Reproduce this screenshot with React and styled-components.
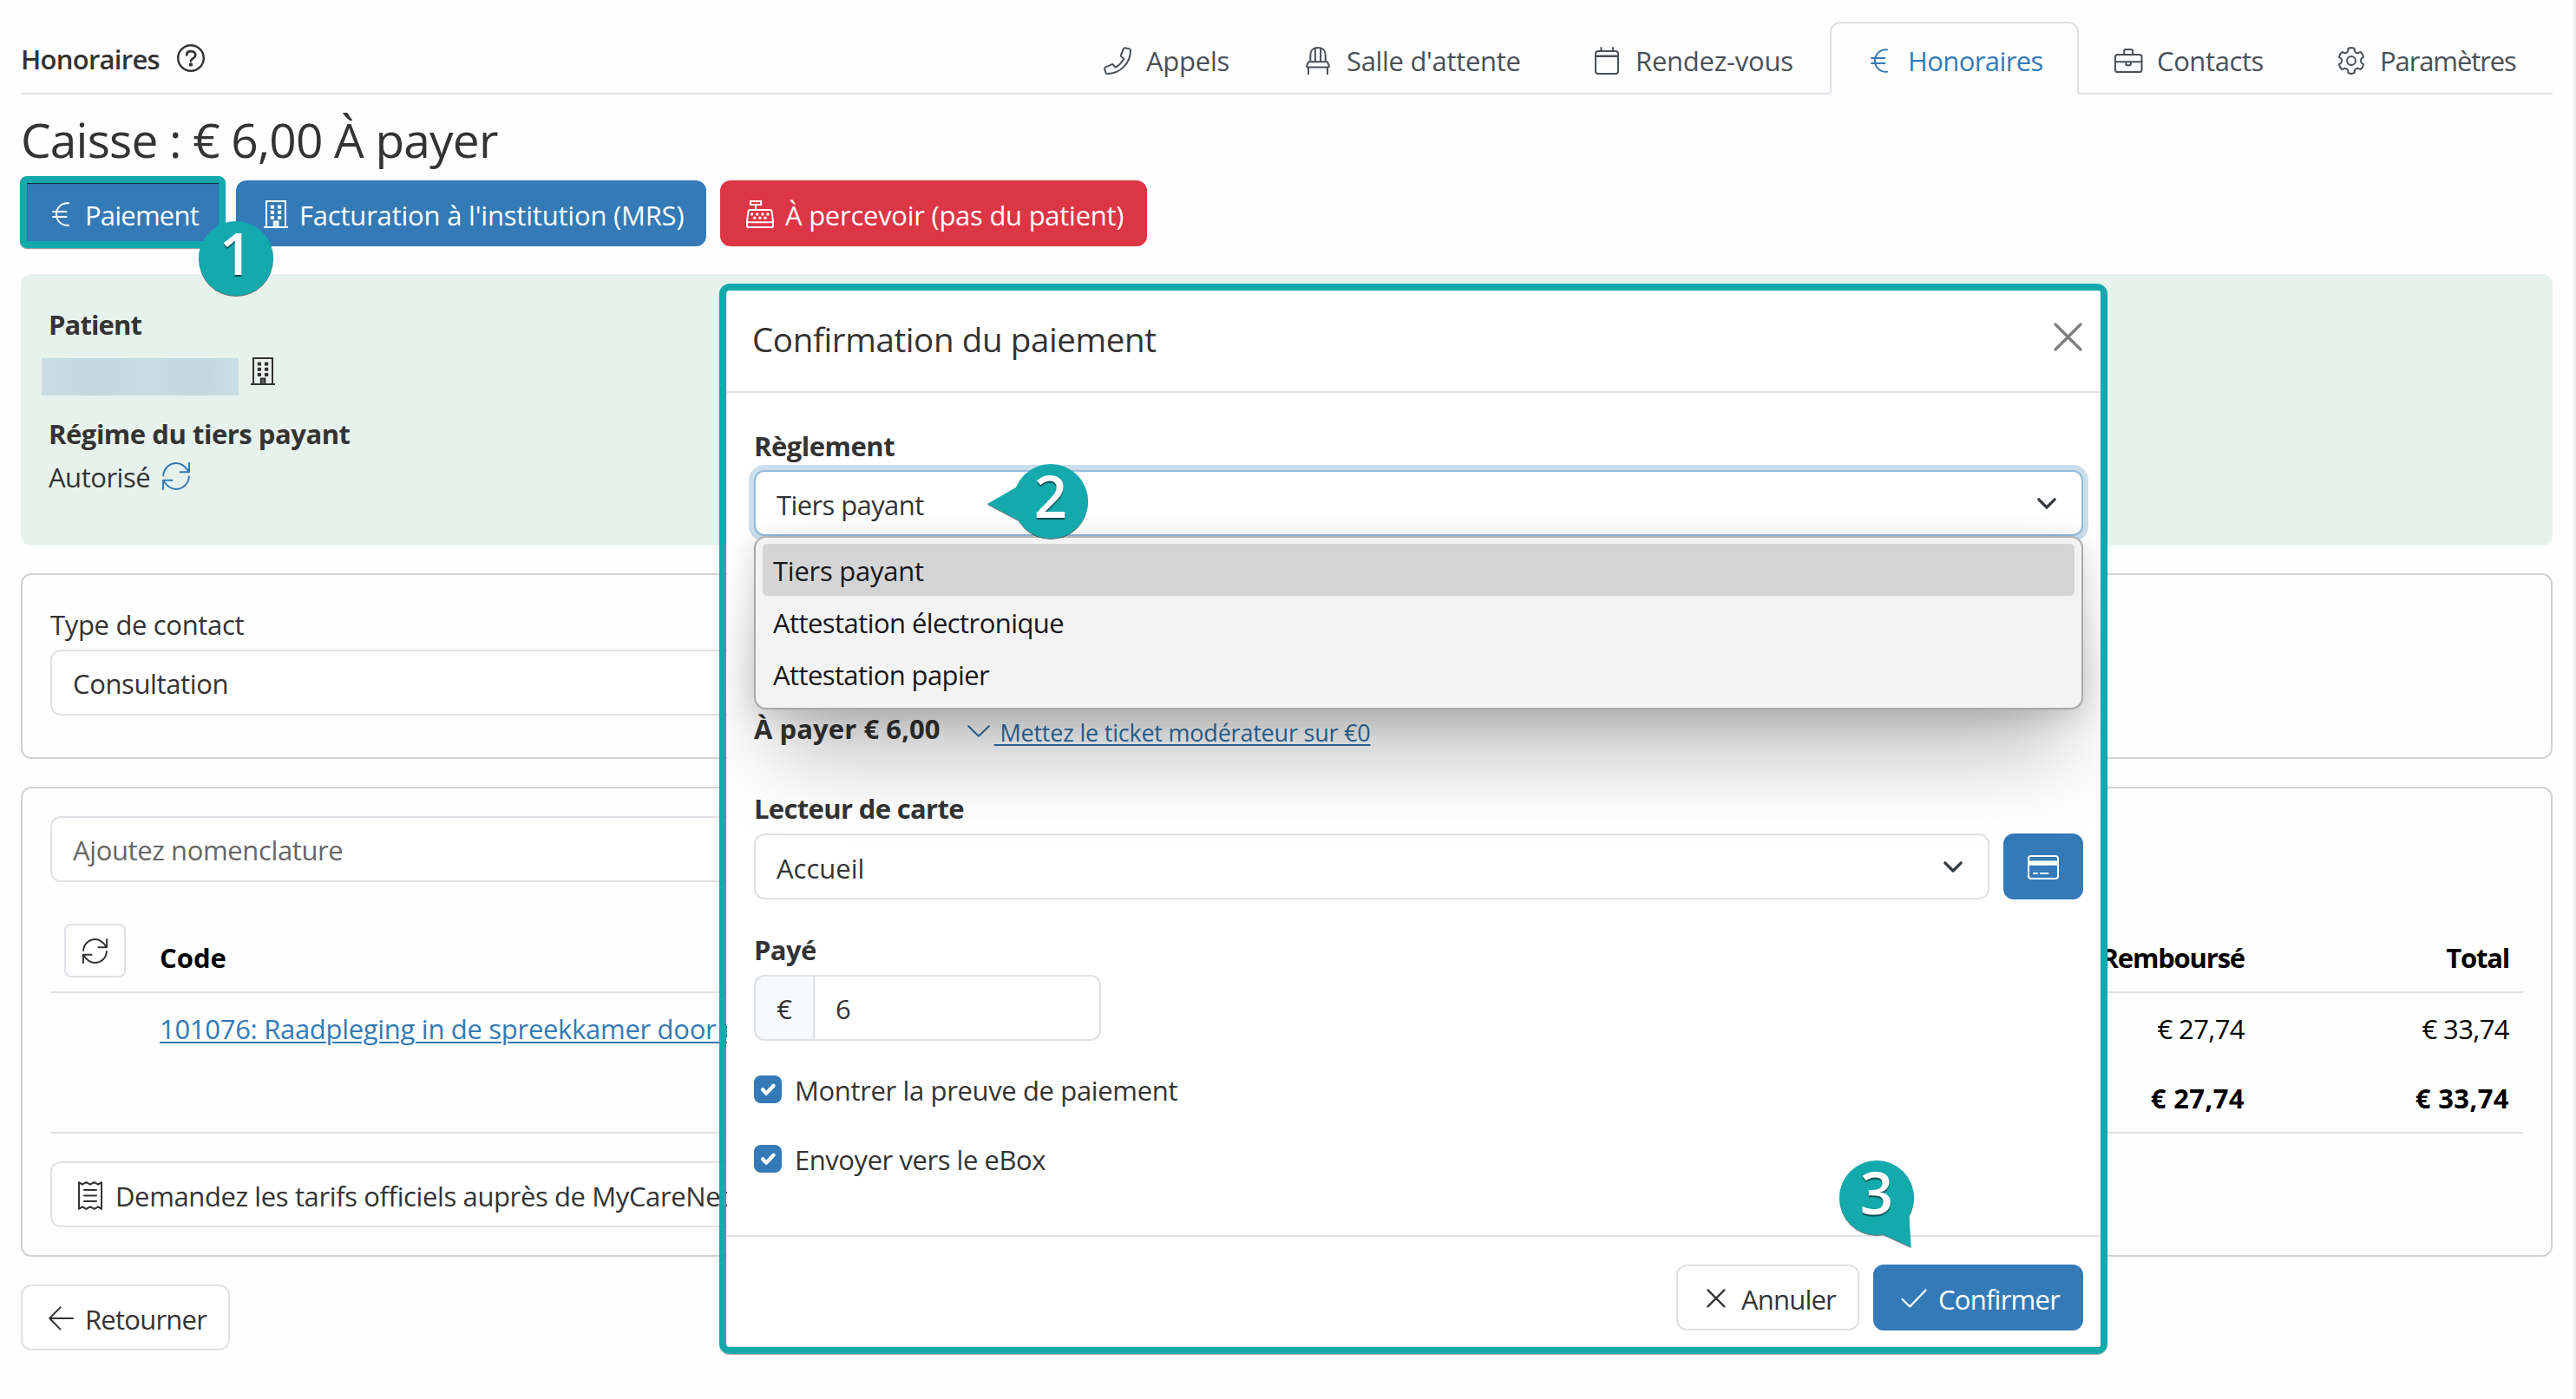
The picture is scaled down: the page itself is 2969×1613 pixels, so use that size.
import React from "react";
import styled, { createGlobalStyle } from "styled-components";

const C = {
  ink: "#333333",
  nav: "#495057",
  blue: "#337ab7",
  red: "#dc3545",
  teal: "#13a9ad",
  line: "#dee2e6",
  card: "#d2d2d2",
};

const GlobalStyle = createGlobalStyle`
  *, *::before, *::after { box-sizing: border-box; }
  body {
    margin: 0;
    background: #fefefe;
    color: ${C.ink};
    font-family: "Open Sans", "Noto Sans", sans-serif;
    font-size: 31px;
    line-height: 48px;
  }
  svg { display: block; flex: none; overflow: visible; }
`;

/* ---------- text ---------- */
const Text = styled.span`
  display: inline-block;
  padding-top: 2px;
  line-height: 46px;
  white-space: pre;
  font-weight: ${(p) => p.$weight || 400};
  letter-spacing: ${(p) => p.$ls || 0}px;
`;

const Link = styled.a`
  display: inline-block;
  padding-top: 2px;
  line-height: 46px;
  white-space: pre;
  color: ${(p) => p.$color || C.blue};
  font-size: ${(p) => p.$size || 31}px;
  letter-spacing: ${(p) => p.$ls || 0}px;
  text-decoration: underline;
  text-decoration-thickness: 2px;
  text-underline-offset: 3px;
  text-decoration-skip-ink: auto;
`;

/* ---------- icons ---------- */
const Line = ({ w, h, sw = 2, children, ...rest }) => (
  <svg
    width={w}
    height={h}
    viewBox={`0 0 ${w} ${h}`}
    fill="none"
    stroke="currentColor"
    strokeWidth={sw}
    strokeLinecap="round"
    strokeLinejoin="round"
    {...rest}
  >
    {children}
  </svg>
);

const HelpIcon = () => (
  <Line w={32} h={32} sw={2.4}>
    <circle cx="16" cy="16" r="14.8" />
    <path d="M11.2 12.4c.2-2.600 2-4.200 4.500-4.200h.900c2.600 0 4.600 1.800 4.600 4.200 0 1.700-.9 2.900-2.300 3.700-1.700 1-2.900 1.500-2.900 3.200" strokeWidth="2.8" />
    <circle cx="16" cy="23.400" r="1.300" fill="currentColor" stroke="none" />
    <circle cx="16" cy="23.400" r="1" fill="currentColor" />
  </Line>
);
const PhoneIcon = () => (
  <Line w={32} h={32}>
    <path d="M1.700 23.600 9.200 20.300Q10.400 19.800 11.200 20.800L13.600 23.700Q20 20.300 23.400 13.800L20.500 11.400Q19.500 10.500 20 9.400L23 2.100Q23.500.9 24.800 1.200L29.800 2.400Q31 2.700 31 4C31 19 19 31 4 31Q2.700 31 2.400 29.800L1.100 24.800Q.9 23.900 1.700 23.600Z" />
  </Line>
);
const ChairIcon = () => (
  <Line w={28} h={32}>
    <path d="M5.300 16.500V9.200C5.300 4 8.700 1 14 1s8.700 3 8.700 8.200v7.300M10.900 1.800v14.700M17.100 1.800v14.700" />
    <path d="M4 17.200h20q.9 0 1.200.8l1.500 3.400q.7 2-1.300 2H2.600q-2 0-1.300-2l1.500-3.400q.3-.8 1.200-.8z" />
    <path d="M3 24v7.200M25 24v7.200" />
  </Line>
);
const CalendarIcon = () => (
  <Line w={28} h={32}>
    <rect x="1" y="5" width="26" height="26" rx="3" />
    <path d="M1 10.800h26" strokeWidth="2.400" />
    <path d="M7.400 1v4M21 1v4" />
  </Line>
);
const EuroIcon = () => (
  <Line w={20} h={28}>
    <path d="M19 1.200h-1.500C10.400 1.200 5 6.800 5 14s5.400 12.800 12.500 12.800H19M1 11h15.500M1 17h15.500" />
  </Line>
);
const BriefcaseIcon = () => (
  <Line w={32} h={28}>
    <rect x="1" y="7" width="30.500" height="20" rx="2.600" />
    <path d="M11.200 7V2.500q0-1.500 1.500-1.500h6.800q1.500 0 1.500 1.500V7M1 15.200h30.500M13.300 15.200v3q0 1 1 1h3.500q1 0 1-1v-3" />
  </Line>
);
const gearPath = (() => {
  const pts = [];
  const at = (deg, r) => {
    const a = (deg * Math.PI) / 180;
    pts.push(`${(16 + r * Math.cos(a)).toFixed(2)} ${(16 + r * Math.sin(a)).toFixed(2)}`);
  };
  for (let k = 0; k < 6; k += 1) {
    const a = -90 + 60 * k;
    at(a - 18, 11.9);
    at(a - 14, 14.6);
    at(a, 15);
    at(a + 14, 14.6);
    at(a + 18, 11.9);
    at(a + 30, 10.7);
  }
  return `M${pts.join("L")}Z`;
})();
const GearIcon = () => (
  <Line w={32} h={32}>
    <path d={gearPath} />
    <circle cx="16" cy="16" r="4.900" />
  </Line>
);
const BuildingIcon = () => (
  <Line w={28} h={32} strokeLinecap="butt" strokeLinejoin="miter">
    <path d="M3 31V1h22v30M0 31h28" />
    <path d="M11.800 31v-6.500h4.600V31" />
    <g fill="currentColor" stroke="none">
      {[5.6, 11.8, 18].map((y) => (
        <React.Fragment key={y}>
          <rect x="7.800" y={y} width="4.200" height="4" />
          <rect x="16" y={y} width="4.200" height="4" />
        </React.Fragment>
      ))}
      <rect x="12" y="24.500" width="4.200" height="6.500" opacity=".75" />
    </g>
  </Line>
);
const RegisterIcon = () => (
  <Line w={32} h={32}>
    <rect x="5" y="1" width="12.200" height="4" strokeLinejoin="miter" />
    <path d="M11 5.500v5M4.500 11h23q1.700 0 2 1.600L31 24.500v4.700q0 1.800-1.800 1.800H2.800Q1 31 1 29.200v-4.700l1.500-11.900Q2.800 11 4.500 11zM1 25.200h30" />
    <g fill="currentColor" stroke="none">
      {[6.6, 12.7, 18.9, 25].map((x) => (
        <circle key={x} cx={x} cy="16" r="1.700" />
      ))}
      {[9.7, 15.9, 22].map((x) => (
        <circle key={x} cx={x} cy="20.200" r="1.700" />
      ))}
    </g>
  </Line>
);
const RefreshIcon = ({ size = 32 }) => (
  <svg width={size} height={size} viewBox="0 0 32 32" fill="none" stroke="currentColor" strokeWidth={64 / size} strokeLinecap="round" strokeLinejoin="round">
    <path d="M1.200 15.500C1.600 7.400 8.200 1 16.200 1c5.800 0 10.700 4 14.600 10M31 1v10.300H20.500M30.800 16.500C30.400 24.600 23.800 31 15.800 31 10 31 5.100 27 1.200 21M1 31V20.700h10.500" />
  </svg>
);
const ReceiptIcon = () => (
  <Line w={28} h={33}>
    <path d="M1 1.200v30.600l3.800-2.500 4.600 2.600 4.600-2.600 4.600 2.600 4.600-2.600 3.800 2.500V1.200l-3.800 2.500L18.600 1.100 14 3.700 9.400 1.100 4.800 3.700zM7 10h14M7 16.500h14M7 23h14" />
  </Line>
);
const BackIcon = () => (
  <Line w={29} h={28}>
    <path d="M1.400 14H28M13.500 1.400 1.200 14l12.300 12.600" />
  </Line>
);
const SelectArrow = () => (
  <Line w={22} h={13} sw={3.2}>
    <path d="m1.800 1.800 9.200 9.200 9.200-9.200" stroke="#343a40" />
  </Line>
);
const ThinArrow = () => (
  <Line w={26} h={14}>
    <path d="M1.200 1.200 13 12.800 24.800 1.200" />
  </Line>
);
const CloseIcon = () => (
  <Line w={33} h={33} sw={3.4}>
    <path d="m2 2 29 29M31 2 2 31" stroke="#7f7f7f" />
  </Line>
);
const CrossIcon = () => (
  <Line w={22} h={22} sw={2.3}>
    <path d="m1.400 1.400 19 19M20.400 1.400l-19 19" />
  </Line>
);
const CheckIcon = () => (
  <Line w={30} h={22} sw={2.2}>
    <path d="m1.500 12 8.700 8.500L28.500 1.500" />
  </Line>
);
const CardIcon = () => (
  <Line w={36} h={28}>
    <rect x="1" y="1" width="34" height="26" rx="3" />
    <path d="M2 6.400h32v5.400H2z" fill="currentColor" stroke="none" />
    <path d="M7 21h4M15 21h8.500" />
  </Line>
);
const TickIcon = () => (
  <svg width="32" height="32" viewBox="0 0 20 20" fill="none" stroke="#fff" strokeWidth="2.700" strokeLinecap="round" strokeLinejoin="round">
    <path d="m6.300 10.200 2.600 2.700 5.200-5.500" />
  </svg>
);

/* ---------- page frame ---------- */
const Page = styled.div`
  position: relative;
  width: 2969px;
  height: 1613px;
  padding: 0 24px;
  border-right: 3px solid #eeeeef;
  overflow: hidden;
  display: flex;
  flex-direction: column;
  align-items: stretch;
`;

const Header = styled.header`
  height: 109px;
  flex: none;
  display: flex;
  justify-content: space-between;
  align-items: flex-end;
  border-bottom: 2px solid ${C.line};
`;

const Crumb = styled.div`
  display: flex;
  align-items: center;
  gap: 20px;
  height: 80px;
`;

const Tabs = styled.nav`
  display: flex;
  margin-bottom: -2px;
`;

const Tab = styled.div`
  height: 84px;
  width: ${(p) => p.$width}px;
  display: flex;
  align-items: center;
  padding: 6px 0 0 ${(p) => (p.$active ? 35 : 37)}px;
  color: ${(p) => (p.$active ? C.blue : C.nav)};
  border-radius: 12px 12px 0 0;
  border: ${(p) => (p.$active ? `2px solid ${C.line}` : "0")};
  border-bottom: ${(p) => (p.$active ? "2px solid #fefefe" : "0")};
`;

const TabIcon = styled.span`
  width: 40px;
  margin-right: 13px;
  display: flex;
  justify-content: center;
`;

const TabLabel = styled.span`
  height: 50px;
`;

const Title = styled.h1`
  margin: 14px 0 10px;
  height: 75px;
  line-height: 75px;
  font-size: 55px;
  font-weight: 400;
  letter-spacing: -0.81px;
`;

const Actions = styled.div`
  display: flex;
  gap: 16px;
  margin-bottom: 32px;
`;

const tones = {
  primary: { bg: C.blue, fg: "#fff", line: C.blue },
  danger: { bg: C.red, fg: "#fff", line: C.red },
  plain: { bg: "#fff", fg: C.ink, line: C.line },
};

const Button = styled.button`
  height: 76px;
  width: ${(p) => (p.$width ? `${p.$width}px` : "auto")};
  flex: none;
  display: flex;
  align-items: center;
  justify-content: ${(p) => (p.$center ? "center" : "flex-start")};
  gap: ${(p) => p.$gap || 12}px;
  padding: 2px 0 0 ${(p) => p.$pad || 0}px;
  border: 2px solid ${(p) => tones[p.$tone].line};
  border-radius: 12px;
  background: ${(p) => tones[p.$tone].bg};
  color: ${(p) => tones[p.$tone].fg};
  font: inherit;
  text-align: left;
`;

/* ---------- cards ---------- */
const PatientPanel = styled.section`
  flex: none;
  height: 313px;
  margin-bottom: 32px;
  padding: 33px 32px;
  border-radius: 12px;
  background: #e8f2ec;
  display: flex;
  flex-direction: column;
`;

const NameRow = styled.div`
  display: flex;
  align-items: flex-start;
  gap: 14px;
  height: 44px;
  margin: 15px 0 19px -8px;
`;

const Redacted = styled.div`
  width: 227px;
  height: 43px;
  margin-top: 1px;
  background: linear-gradient(90deg, #cadde3 0%, #c1d8e0 26%, #c8dce3 54%, #c1d8e0 78%, #cadee4 100%);
`;

const StatusRow = styled.div`
  display: flex;
  align-items: center;
  gap: 14px;
  height: 51px;
  color: ${C.ink};
  svg { color: ${C.blue}; }
`;

const Card = styled.section`
  flex: none;
  height: ${(p) => p.$height}px;
  margin-bottom: 32px;
  padding: 32px;
  border: 2px solid ${C.card};
  border-radius: 12px;
  display: flex;
  flex-direction: column;
`;

const Field = styled.div`
  flex: none;
  height: 76px;
  display: flex;
  align-items: center;
  justify-content: space-between;
  padding: 0 29px 0 ${(p) => p.$pad || 24}px;
  border: 2px solid ${(p) => (p.$focus ? "#94bbdc" : C.line)};
  border-radius: ${(p) => p.$radius || "12px"};
  box-shadow: ${(p) => (p.$focus ? "0 0 0 6px #cbdeed" : "none")};
  background: #fff;
  color: ${(p) => (p.$muted ? "#666" : C.ink)};
  margin-top: ${(p) => p.$top || 0}px;
  width: ${(p) => (p.$width ? `${p.$width}px` : "auto")};
`;

const FieldText = styled(Text)`
  padding-top: 4px;
`;

const Table = styled.div`
  margin: 32px 0;
  color: #000;
  border-bottom: 2px solid ${C.line};
`;

const Row = styled.div`
  display: grid;
  grid-template-columns: 94px 1fr 304px 304px;
  align-items: end;
  padding: 16px;
  border-bottom: ${(p) => (p.$head ? `2px solid ${C.line}` : "0")};
`;

const Amount = styled.div`
  height: 48px;
  padding-right: ${(p) => (p.$last ? 0 : 1)}px;
  text-align: right;
`;

const Cell = styled.div`
  height: 48px;
  padding-left: 16px;
`;

const IconButton = styled.button`
  width: 71px;
  height: 62px;
  padding: 0;
  display: flex;
  align-items: center;
  justify-content: center;
  border: 2px solid ${C.line};
  border-radius: 8px;
  background: #fff;
  color: ${C.ink};
`;

/* ---------- dialog ---------- */
const DialogFrame = styled.div`
  position: absolute;
  left: 829px;
  top: 327px;
  width: 1600px;
  height: 1234px;
  border: 8px solid ${C.teal};
  border-radius: 12px;
  box-shadow: 0 1px 1px rgba(0, 0, 0, 0.4);
`;

const Dialog = styled.div`
  height: 100%;
  margin-left: 1px;
  border-radius: 3px;
  background: #fff;
  overflow: hidden;
  display: flex;
  flex-direction: column;
`;

const DialogHead = styled.div`
  flex: none;
  height: 118px;
  padding: 0 21px 0 29px;
  display: flex;
  justify-content: space-between;
  border-bottom: 2px solid ${C.line};
`;

const DialogTitle = styled.h2`
  margin: 28px 0 0;
  line-height: 56px;
  font-size: 38.5px;
  font-weight: 400;
  letter-spacing: -0.38px;
`;

const CloseSlot = styled.span`
  padding-top: 37px;
`;

const DialogBody = styled.div`
  flex: none;
  height: 971px;
  padding: 36px 20px 0 31px;
  display: flex;
  flex-direction: column;
  align-items: stretch;
`;

const Anchor = styled.div`
  position: relative;
  margin-top: 5px;
`;

const Menu = styled.div`
  position: absolute;
  left: 0;
  right: 0;
  top: 76px;
  height: 200px;
  padding: 7px 8px;
  border: 2px solid #a9a9a9;
  border-top-color: #b4b4b4;
  border-radius: 14px;
  background: #f3f3f3;
  color: #16161a;
  box-shadow: 0 6px 34px rgba(0, 0, 0, 0.16), 0 70px 100px -22px rgba(0, 0, 0, 0.27);
`;

const Option = styled.div`
  height: 60px;
  padding: 6px 0 0 12px;
  border-radius: 5px;
  background: ${(p) => (p.$active ? "#d5d5d5" : "transparent")};
`;

const PayRow = styled.div`
  display: flex;
  height: 48px;
  margin-top: 197px;
`;

const TicketToggle = styled.div`
  display: flex;
  align-items: center;
  gap: 5px;
  padding-top: 10px;
  margin-left: 31px;
  color: #2f70a8;
  svg { margin-top: -3px; }
`;

const Label = styled.div`
  height: 48px;
  margin-top: ${(p) => p.$top || 0}px;
`;

const ReaderRow = styled.div`
  display: flex;
  gap: 16px;
  margin-top: 6px;
  > :first-child { flex: 1; }
`;

const InputGroup = styled.div`
  display: flex;
  width: 400px;
  margin-top: 6px;
  > :last-child { flex: 1; margin-left: -2px; }
`;

const Addon = styled.div`
  width: 70px;
  height: 76px;
  display: flex;
  align-items: center;
  justify-content: center;
  border: 2px solid ${C.line};
  border-radius: 12px 0 0 12px;
  background: #f8f9fa;
`;

const CheckRow = styled.label`
  display: flex;
  align-items: center;
  gap: 15px;
  height: 48px;
  margin-top: ${(p) => p.$top}px;
`;

const CheckBox = styled.span`
  width: 32px;
  height: 32px;
  margin-bottom: 1px;
  border-radius: 8px;
  background: ${C.blue};
`;

const DialogFoot = styled.div`
  flex: 1;
  display: flex;
  justify-content: flex-end;
  gap: 16px;
  padding: 32px 20px 0 0;
  border-top: 2px solid ${C.line};
`;

/* ---------- step callouts ---------- */
const Outline = styled.div`
  position: absolute;
  left: 23px;
  top: 203px;
  width: 237px;
  height: 83px;
  border: 8px solid ${C.teal};
  border-radius: 8px;
  box-shadow: 0 1px 1px rgba(0, 0, 0, 0.45), inset 0 1px 1px rgba(0, 0, 0, 0.7);
`;

const Callout = styled.div`
  position: absolute;
  left: ${(p) => p.$x}px;
  top: ${(p) => p.$y}px;
  width: 86px;
  height: 86px;
  display: flex;
  justify-content: center;
  color: #fff;
  font-size: 67px;
  font-weight: 600;
  line-height: 73px;
  text-shadow: 0 1.5px 1px rgba(0, 0, 0, 0.55);
`;

const Bubble = styled.svg`
  position: absolute;
  inset: 0;
  filter: drop-shadow(0 1px 0.6px rgba(0, 0, 0, 0.55));
`;

const Digit = styled.span`
  position: relative;
`;

const Step = ({ n, x, y, tip }) => (
  <Callout $x={x} $y={y}>
    <Bubble width="86" height="86" viewBox="0 0 86 86">
      <g fill={C.teal}>
        <circle cx="43" cy="43" r="43" />
        {tip && <path d={tip} />}
      </g>
    </Bubble>
    <Digit>{n}</Digit>
  </Callout>
);

const TABS = [
  { label: "Appels", ls: -0.25, width: 231, icon: <PhoneIcon /> },
  { label: "Salle d'attente", ls: -0.32, width: 333, icon: <ChairIcon /> },
  { label: "Rendez-vous", ls: -0.23, width: 314, icon: <CalendarIcon /> },
  { label: "Honoraires", ls: -0.6, width: 287, icon: <EuroIcon />, active: true },
  { label: "Contacts", ls: -0.4, width: 257, icon: <BriefcaseIcon /> },
  { label: "Paramètres", ls: -1.1, width: 289, icon: <GearIcon /> },
];

const OPTIONS = [
  { label: "Tiers payant", ls: -0.25 },
  { label: "Attestation électronique", ls: -0.57 },
  { label: "Attestation papier", ls: -0.6 },
];

export default function App() {
  return (
    <>
      <GlobalStyle />
      <Page>
        <Header>
          <Crumb>
            <Text $weight={600} $ls={-0.72}>Honoraires</Text>
            <HelpIcon />
          </Crumb>
          <Tabs>
            {TABS.map((t) => (
              <Tab key={t.label} $active={t.active} $width={t.width}>
                <TabIcon>{t.icon}</TabIcon>
                <TabLabel><Text $ls={t.ls}>{t.label}</Text></TabLabel>
              </Tab>
            ))}
          </Tabs>
        </Header>

        <Title>Caisse : € 6,00 À payer</Title>

        <Actions>
          <Button $tone="primary" $width={232} $pad={34} $gap={18}>
            <EuroIcon />
            <Text $ls={-0.8}>Paiement</Text>
          </Button>
          <Button $tone="primary" $width={542} $pad={30} $gap={13}>
            <BuildingIcon />
            <Text $ls={-0.2}>Facturation à l'institution (MRS)</Text>
          </Button>
          <Button $tone="danger" $width={492} $pad={28} $gap={13}>
            <RegisterIcon />
            <Text $ls={-0.26}>À percevoir (pas du patient)</Text>
          </Button>
        </Actions>

        <PatientPanel>
          <Text $weight={700} $ls={-0.9}>Patient</Text>
          <NameRow>
            <Redacted />
            <BuildingIcon />
          </NameRow>
          <Text $weight={700} $ls={-0.47}>Régime du tiers payant</Text>
          <StatusRow>
            <Text $ls={-0.48}>Autorisé</Text>
            <RefreshIcon />
          </StatusRow>
        </PatientPanel>

        <Card $height={214}>
          <Text $ls={-0.33}>Type de contact</Text>
          <Field $top={6} $width={1400}>
            <Text $ls={-0.38}>Consultation</Text>
          </Field>
        </Card>

        <Card $height={542}>
          <Field $muted $width={1400}>
            <Text $ls={-0.38}>Ajoutez nomenclature</Text>
          </Field>
          <Table>
            <Row $head>
              <IconButton><RefreshIcon size={29} /></IconButton>
              <Cell><Text $weight={700}>Code</Text></Cell>
              <Amount><Text $weight={700} $ls={-1.2}>Remboursé</Text></Amount>
              <Amount $last><Text $weight={700} $ls={-1.2}>Total</Text></Amount>
            </Row>
            <Row>
              <span />
              <Cell>
                <Link $ls={-0.3}>101076: Raadpleging in de spreekkamer door een</Link>
              </Cell>
              <Amount><Text $ls={-0.6}>€ 27,74</Text></Amount>
              <Amount $last><Text $ls={-0.6}>€ 33,74</Text></Amount>
            </Row>
            <Row>
              <span />
              <Cell />
              <Amount><Text $weight={700} $ls={0.4}>€ 27,74</Text></Amount>
              <Amount $last><Text $weight={700} $ls={0.4}>€ 33,74</Text></Amount>
            </Row>
          </Table>
          <Button $tone="plain" $width={800} $pad={30} $gap={15}>
            <ReceiptIcon />
            <Text $ls={-0.38}>Demandez les tarifs officiels auprès de MyCareNet</Text>
          </Button>
        </Card>

        <Button $tone="plain" $width={241} $pad={30} $gap={13}>
          <BackIcon />
          <Text $ls={-0.77}>Retourner</Text>
        </Button>

        <DialogFrame>
          <Dialog>
            <DialogHead>
              <DialogTitle>Confirmation du paiement</DialogTitle>
              <CloseSlot><CloseIcon /></CloseSlot>
            </DialogHead>
            <DialogBody>
              <Label><Text $weight={700} $ls={-0.5}>Règlement</Text></Label>
              <Anchor>
                <Field $focus $pad={24}>
                  <FieldText $ls={-0.6}>Tiers payant</FieldText>
                  <SelectArrow />
                </Field>
                <Menu>
                  {OPTIONS.map((o, i) => (
                    <Option key={o.label} $active={i === 0}>
                      <Text $ls={o.ls}>{o.label}</Text>
                    </Option>
                  ))}
                </Menu>
              </Anchor>
              <PayRow>
                <Text $weight={700} $ls={0.07}>À payer € 6,00</Text>
                <TicketToggle>
                  <ThinArrow />
                  <Link $size={27} $ls={-0.22} $color="#2f70a8"> Mettez le ticket modérateur sur €0</Link>
                </TicketToggle>
              </PayRow>
              <Label $top={44}><Text $weight={700} $ls={-0.66}>Lecteur de carte</Text></Label>
              <ReaderRow>
                <Field $pad={24}>
                  <FieldText>Accueil</FieldText>
                  <SelectArrow />
                </Field>
                <Button $tone="primary" $width={92} $center>
                  <CardIcon />
                </Button>
              </ReaderRow>
              <Label $top={33}><Text $weight={700} $ls={-0.61}>Payé</Text></Label>
              <InputGroup>
                <Addon><Text>€</Text></Addon>
                <Field $radius="0 12px 12px 0">
                  <Text>6</Text>
                </Field>
              </InputGroup>
              <CheckRow $top={32}>
                <CheckBox><TickIcon /></CheckBox>
                <Text $ls={-0.36}>Montrer la preuve de paiement</Text>
              </CheckRow>
              <CheckRow $top={32}>
                <CheckBox><TickIcon /></CheckBox>
                <Text $ls={-0.45}>Envoyer vers le eBox</Text>
              </CheckRow>
            </DialogBody>
            <DialogFoot>
              <Button $tone="plain" $width={211} $pad={33} $gap={18}>
                <CrossIcon />
                <Text $ls={-0.8}>Annuler</Text>
              </Button>
              <Button $tone="primary" $width={242} $pad={30} $gap={13}>
                <CheckIcon />
                <Text $ls={-0.75}>Confirmer</Text>
              </Button>
            </DialogFoot>
          </Dialog>
        </DialogFrame>

        <Outline />
        <Step n="1" x={229} y={255} />
        <Step n="2" x={1168} y={535} tip="M-30 46 8 24v42z" />
        <Step n="3" x={2120} y={1338} tip="M82.500 100 50 85 80 58z" />
      </Page>
    </>
  );
}
